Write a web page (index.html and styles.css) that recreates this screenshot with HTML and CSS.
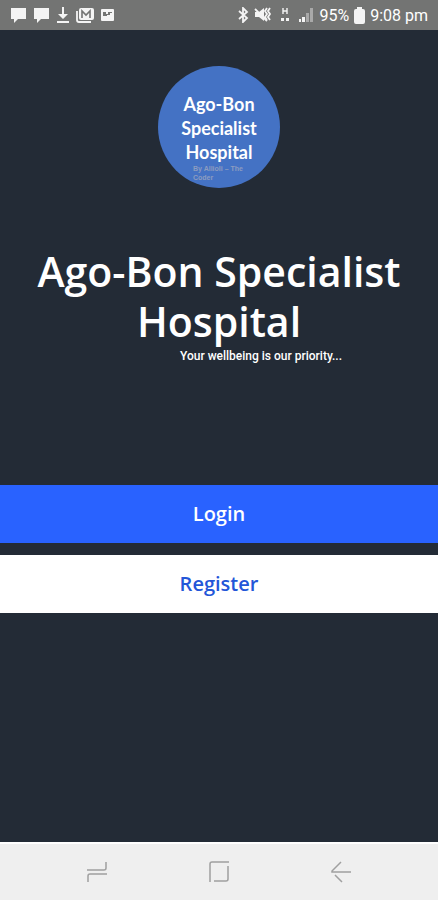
FILE: index.html
```html
<!DOCTYPE html>
<html lang="en">
  <head>
    <meta charset="utf-8">
    <meta name="viewport" content="width=device-width, initial-scale=1">
    <title>Ago-Bon Specialist Hospital</title>
    <link rel="stylesheet" href="styles.css">
  </head>

  <body>

    <div class="statusbar">
      <div class="notifications">
        <svg width="17" height="16" viewBox="0 0 17 16"><path d="M1 1h15v11H8l-4 4v-4H1z"/></svg>
        <svg width="17" height="16" viewBox="0 0 17 16"><path d="M1 1h15v11H8l-4 4v-4H1z"/></svg>
        <svg width="14" height="16" viewBox="0 0 14 16"><path d="M6 0h2v7h4l-5 5-5-5h4zM1 14h12v2H1z"/></svg>
        <svg width="18" height="16" viewBox="0 0 18 16"><path d="M5 1h11q2 0 2 2v8q0 2-2 2H5q-2 0-2-2V3q0-2 2-2z"/><path d="M1 4v9q0 2 2 2h12" class="line"/><path d="M6 11V4l4 4 4-4v7" class="dark"/></svg>
        <svg width="15" height="16" viewBox="0 0 15 16"><rect x="1" y="2" width="13" height="12" rx="1"/><path d="M3 9V5h3v2h2V5h4v1h-2v2H7v1z" class="darkfill"/></svg>
      </div>
      <div class="system">
        <svg width="12" height="16" viewBox="0 0 12 16"><path d="M2 4l8 7-4 4V1l4 4-8 7" class="line"/></svg>
        <svg width="18" height="16" viewBox="0 0 18 16"><path d="M1 5h4l5-4v13l-5-4H1z"/><path d="M1 2l12 12M13 1l-2 3 2 3-2 3 2 3M16 1l-2 3 2 3-2 3 2 3" class="line"/></svg>
        <svg width="16" height="16" viewBox="0 0 16 16"><path d="M6 1v6M10 1v6M6 4h4" class="thin"/><path d="M4 11h3v3H4zM9 11h3v3H9z"/></svg>
        <svg width="16" height="16" viewBox="0 0 16 16"><path d="M1 12h2v3H1zM4 10h3v5H4z"/><path d="M8 6h3v9H8zM12 1h3v14h-3z" class="faint"/></svg>
        <span>95%</span>
        <svg width="11" height="17" viewBox="0 0 11 17"><path d="M3 0h5v2h1q2 0 2 2v11q0 2-2 2H2q-2 0-2-2V4q0-2 2-2h1z"/></svg>
        <span>9:08 pm</span>
      </div>
    </div>

    <main class="content">
      <div class="logo">
        <div class="logoname">Ago-Bon<br>Specialist<br>Hospital</div>
        <div class="logoby">By Allioli – The Coder</div>
      </div>

      <h1 class="headline">Ago-Bon Specialist Hospital</h1>
      <p class="tagline">Your wellbeing is our priority...</p>

      <div class="actions">
        <button type="button" class="btn login">Login</button>
        <button type="button" class="btn register">Register</button>
      </div>
    </main>

    <nav class="navbar">
      <button type="button" aria-label="Recent apps"><svg width="22" height="24" viewBox="0 0 22 24"><path d="M1 10h17q2 0 2-2V2M21 14H4q-2 0-2 2v6"/></svg></button>
      <button type="button" aria-label="Home"><svg width="22" height="24" viewBox="0 0 22 24"><path d="M2 22V4q0-2 2-2h17M20 6v13q0 2-2 2H6"/></svg></button>
      <button type="button" aria-label="Back"><svg width="22" height="24" viewBox="0 0 22 24"><path d="M11 2l-9 9v1h19M5 15l7 7"/></svg></button>
    </nav>

  </body>
</html>
```
FILE: styles.css
```css
body {
  margin: 0px;
  padding: 0px;
  min-height: 100vh;
  display: flex;
  flex-direction: column;
  background-color: #232b36;
  font-family: "Open Sans", "Noto Sans", sans-serif;
  color: #ffffff;
}

button { font-family: inherit; border: 0px; margin: 0px; padding: 0px; cursor: pointer; }

/* status bar */
.statusbar {
  display: flex;
  justify-content: space-between;
  align-items: center;
  height: 30px;
  padding: 0px 10px;
  background-color: #737473;
  font-family: Roboto, sans-serif;
  font-size: 16px;
}
.statusbar svg { fill: #f4f4f4; }
.statusbar .line { fill: none; stroke: #f4f4f4; stroke-width: 1.8; }
.statusbar .thin { fill: none; stroke: #f4f4f4; stroke-width: 1.4; }
.statusbar .dark { fill: none; stroke: #737473; stroke-width: 1.6; }
.statusbar .darkfill { fill: #737473; }
.statusbar .faint { fill: #a9a9a9; }
.notifications { display: flex; align-items: center; gap: 6px; }
.system { display: flex; align-items: center; gap: 5px; }

.content { flex: 1; display: flex; flex-direction: column; align-items: center; padding-top: 36px; }

/* round logo */
.logo {
  box-sizing: border-box;
  width: 122px;
  height: 122px;
  padding-top: 26px;
  border-radius: 50%;
  background-color: #4472c4;
  text-align: center;
}
.logoname { font-family: Lato, sans-serif; font-size: 18px; font-weight: 700; line-height: 24px; }
.logoby {
  width: 52px;
  margin: 0px auto;
  font-family: "Liberation Sans", sans-serif;
  font-size: 7px;
  font-weight: 700;
  line-height: 9px;
  text-align: left;
  color: #8c9cc0;
}

.headline { margin: 58px 24px 0px; font-size: 41px; font-weight: 600; line-height: 50px; text-align: center; }
.tagline { margin: 2px 0px 0px 84px; font-family: Roboto, sans-serif; font-size: 12px; font-weight: 500; line-height: 16px; }

.actions { display: flex; flex-direction: column; gap: 12px; width: 100%; margin-top: 121px; }
.btn { width: 100%; height: 58px; padding-bottom: 2px; font-size: 20px; font-weight: 600; }
.login { background-color: #2962ff; color: #ffffff; }
.register { background-color: #ffffff; color: #2356d8; }

/* navigation bar */
.navbar {
  display: grid;
  grid-template-columns: repeat(3, 1fr);
  box-sizing: border-box;
  height: 58px;
  padding: 0px 36px;
  border-top: 2px solid #ffffff;
  background-color: #efefef;
}
.navbar button { display: flex; justify-content: center; align-items: center; background: none; }
.navbar svg { fill: none; stroke: #a0a0a0; stroke-width: 1.5; }
```
